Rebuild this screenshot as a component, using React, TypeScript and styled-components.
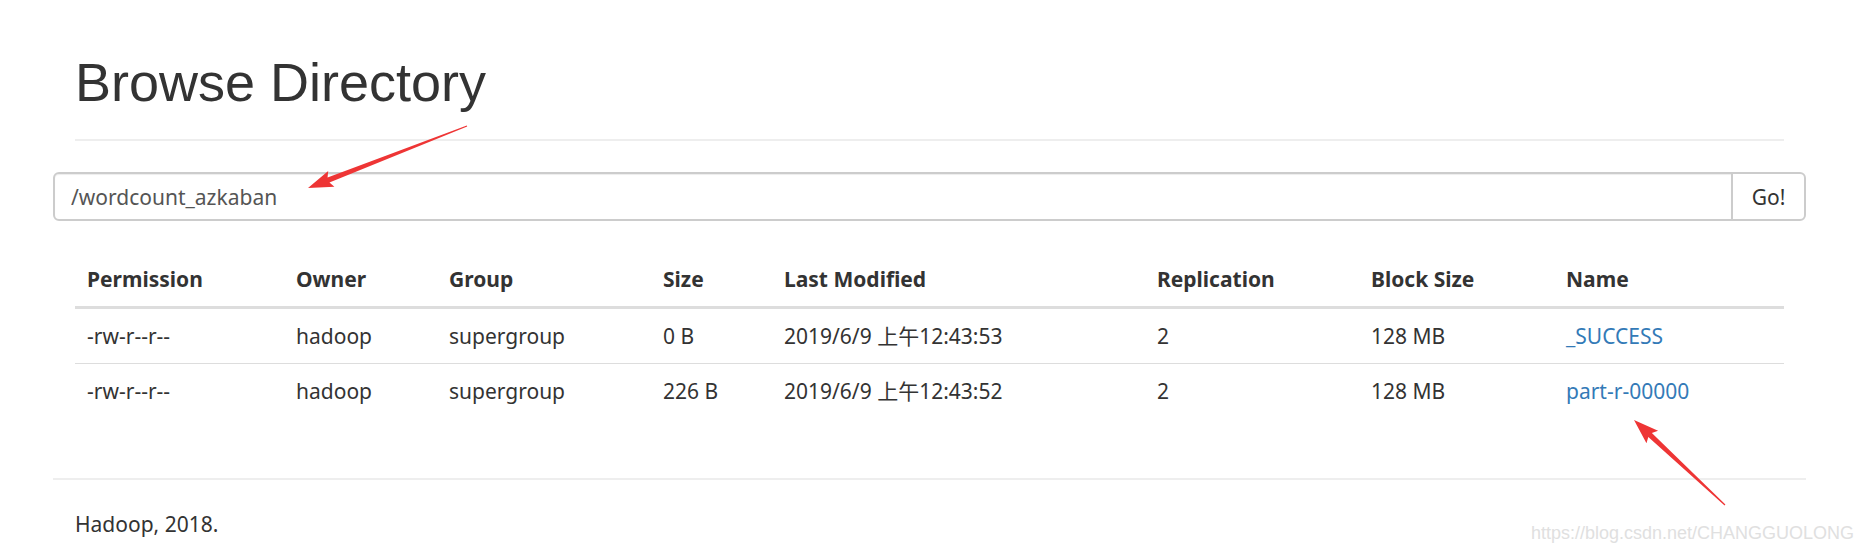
import React from 'react';
import styled, {createGlobalStyle} from 'styled-components';

const GlobalStyle = createGlobalStyle`
  html, body {
    margin: 0;
    padding: 0;
    background: #fff;
  }
  body {
    font-family: "Noto Sans", "Noto Sans CJK SC", sans-serif;
    font-size: 21px;
    line-height: 30px;
    color: #333;
  }
`;

const Page = styled.div`
  position: relative;
  width: 1871px;
  height: 555px;
  overflow: hidden;
`;

const Container = styled.div`
  margin-left: 75px;
  width: 1709px;
`;

const PageHeader = styled.div`
  margin-top: 53px;
  padding-bottom: 27px;
  border-bottom: 2px solid #eee;
`;

const Title = styled.h1`
  margin: 0;
  font-family: "Liberation Sans", Arial, sans-serif;
  font-size: 54px;
  font-weight: 400;
  line-height: 59px;
  color: #333;
`;

const SearchRow = styled.div`
  display: flex;
  margin: 31px -22px 0;
  height: 49px;
`;

const PathInput = styled.input`
  flex: 1;
  box-sizing: border-box;
  height: 49px;
  padding: 0 16px;
  border: 2px solid #ccc;
  border-radius: 6px 0 0 6px;
  font-family: "Noto Sans", "Noto Sans CJK SC", sans-serif;
  font-size: 21px;
  color: #555;
  background: #fff;
  box-shadow: inset 0 1px 1px rgba(0, 0, 0, 0.075);
  outline: none;
`;

const GoButton = styled.button`
  box-sizing: border-box;
  width: 75px;
  height: 49px;
  margin-left: -2px;
  border: 2px solid #ccc;
  border-radius: 0 6px 6px 0;
  background: #fff;
  color: #333;
  font-family: "Noto Sans", "Noto Sans CJK SC", sans-serif;
  font-size: 21px;
  padding: 0;
`;

const FileTable = styled.table`
  width: 100%;
  margin: 31px 0 0;
  border-collapse: collapse;
  table-layout: fixed;
`;

const HeadCell = styled.th<{$w: number}>`
  box-sizing: border-box;
  width: ${p => p.$w}px;
  padding: 12px;
  text-align: left;
  font-weight: 700;
  line-height: 30px;
  border-bottom: 3px solid #ddd;
  vertical-align: bottom;
  white-space: nowrap;
`;

const Row = styled.tr`
  & + & td {
    border-top: 1px solid #ddd;
  }
`;

const Cell = styled.td`
  padding: 12px;
  line-height: 30px;
  white-space: nowrap;
  vertical-align: top;
`;

const FileLink = styled.a`
  color: #337ab7;
  text-decoration: none;
`;

const Footer = styled.div`
  margin: 60px -22px 0;
  border-top: 2px solid #eee;
  padding: 29px 22px 0;
`;

const FooterText = styled.p`
  margin: 0;
`;

const Watermark = styled.div`
  position: absolute;
  left: 1531px;
  top: 521px;
  font-family: "Liberation Sans", Arial, sans-serif;
  font-size: 18px;
  line-height: 24px;
  color: #e0e0e0;
  white-space: nowrap;
`;

const Overlay = styled.svg`
  position: absolute;
  left: 0;
  top: 0;
  pointer-events: none;
`;

const columns = [
    {label: 'Permission', w: 209},
    {label: 'Owner', w: 153},
    {label: 'Group', w: 214},
    {label: 'Size', w: 121},
    {label: 'Last Modified', w: 373},
    {label: 'Replication', w: 214},
    {label: 'Block Size', w: 195},
    {label: 'Name', w: 230},
];

const files = [
    {perm: '-rw-r--r--', owner: 'hadoop', group: 'supergroup', size: '0 B', modified: '2019/6/9 上午12:43:53', repl: '2', block: '128 MB', name: '_SUCCESS'},
    {perm: '-rw-r--r--', owner: 'hadoop', group: 'supergroup', size: '226 B', modified: '2019/6/9 上午12:43:52', repl: '2', block: '128 MB', name: 'part-r-00000'},
];

// red annotation arrow, tapered shaft + notched head
const Arrow = ({from, to}: {from: [number, number]; to: [number, number]}) => {
    const dx = to[0] - from[0];
    const dy = to[1] - from[1];
    const len = Math.sqrt(dx * dx + dy * dy);
    const deg = (Math.atan2(dy, dx) * 180) / Math.PI;
    const head = 22;
    const pts = [
        [0, -0.6], [len - head, -2.6], [len - head - 3, -8.5], [len, 0],
        [len - head - 3, 8.5], [len - head, 2.6], [0, 0.6],
    ].map(p => p.join(',')).join(' ');
    return (
        <polygon
            points={pts}
            fill="#ee3535"
            transform={`translate(${from[0]} ${from[1]}) rotate(${deg})`}
        />
    );
};

const App = () => {
    return (
        <Page>
            <GlobalStyle/>
            <Container>
                <PageHeader>
                    <Title>Browse Directory</Title>
                </PageHeader>
                <SearchRow>
                    <PathInput readOnly value="/wordcount_azkaban"/>
                    <GoButton>Go!</GoButton>
                </SearchRow>
                <FileTable>
                    <thead>
                    <tr>
                        {columns.map(c => <HeadCell key={c.label} $w={c.w}>{c.label}</HeadCell>)}
                    </tr>
                    </thead>
                    <tbody>
                    {files.map(f => (
                        <Row key={f.name}>
                            <Cell>{f.perm}</Cell>
                            <Cell>{f.owner}</Cell>
                            <Cell>{f.group}</Cell>
                            <Cell>{f.size}</Cell>
                            <Cell>{f.modified}</Cell>
                            <Cell>{f.repl}</Cell>
                            <Cell>{f.block}</Cell>
                            <Cell><FileLink href="#">{f.name}</FileLink></Cell>
                        </Row>
                    ))}
                    </tbody>
                </FileTable>
                <Footer>
                    <FooterText>Hadoop, 2018.</FooterText>
                </Footer>
            </Container>
            <Overlay width="1871" height="555" viewBox="0 0 1871 555">
                <Arrow from={[467, 126]} to={[308, 188]}/>
                <Arrow from={[1725, 505]} to={[1634, 420]}/>
            </Overlay>
            <Watermark>https://blog.csdn.net/CHANGGUOLONG</Watermark>
        </Page>
    );
};

export default App;
